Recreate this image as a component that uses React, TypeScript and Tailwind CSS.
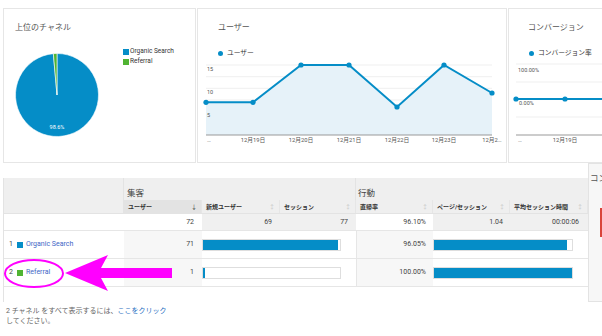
import React from 'react'

const BLUE = '#058dc7'
const GREEN = '#50b432'

const users = [7, 7, 15, 15, 6, 15, 9]
const xs = [8, 55, 103, 151, 199, 246, 294]
const dates = ['…', '12月19日', '12月20日', '12月21日', '12月22日', '12月23日', '12月2…']

function PieChart() {
  const cx = 53
  const cy = 48
  const r = 41.5
  const a = (-1.4 / 100) * 2 * Math.PI
  const gx = cx + r * Math.sin(a)
  const gy = cy - r * Math.cos(a)
  return (
    <svg width="119" height="100" className="shrink-0">
      <path d={`M${cx} ${cy} L${cx} ${cy - r} A${r} ${r} 0 1 1 ${gx} ${gy} Z`} fill={BLUE} stroke="#fff" strokeWidth="0.6" />
      <path d={`M${cx} ${cy} L${gx} ${gy} A${r} ${r} 0 0 1 ${cx} ${cy - r} Z`} fill={GREEN} stroke="#fff" strokeWidth="0.6" />
      <text x={cx} y="82" textAnchor="middle" fontSize="5.5" fill="#fff">98.6%</text>
    </svg>
  )
}

function UsersChart() {
  const ys = users.map((v) => 75 - (v * 70) / 15)
  const pts = xs.map((x, i) => `${x},${ys[i]}`).join(' ')
  const grid = [5, 16.7, 28.3, 40, 51.7, 63.3]
  return (
    <svg width="308" height="90" className="block">
      {grid.map((g) => (
        <line key={g} x1="8" x2="294" y1={g} y2={g} stroke="#efefef" strokeWidth="1" />
      ))}
      <polygon points={`8,75 ${pts} 294,75`} fill="#e6f2f9" />
      <line x1="8" x2="294" y1="75" y2="75" stroke="#999" strokeWidth="1" />
      <polyline points={pts} fill="none" stroke={BLUE} strokeWidth="2" />
      {xs.map((x, i) => (
        <circle key={x} cx={x} cy={ys[i]} r="2.6" fill={BLUE} />
      ))}
      <text x="9" y="11" fontSize="5.5" fill="#555">15</text>
      <text x="9" y="34" fontSize="5.5" fill="#555">10</text>
      <text x="9" y="57" fontSize="5.5" fill="#555">5</text>
      {dates.map((d, i) => (
        <text key={d} x={i === 0 ? 9 : xs[i]} y="82" fontSize="5.8" fill="#555" textAnchor={i === 0 ? 'start' : 'middle'}>
          {d}
        </text>
      ))}
    </svg>
  )
}

function ConvChart() {
  return (
    <svg width="100" height="90" className="block">
      {[4, 22, 57].map((g) => (
        <line key={g} x1="7" x2="100" y1={g} y2={g} stroke="#efefef" strokeWidth="1" />
      ))}
      <line x1="7" x2="100" y1="75" y2="75" stroke="#999" strokeWidth="1" />
      <line x1="7" x2="100" y1="39" y2="39" stroke={BLUE} strokeWidth="2" />
      <circle cx="7" cy="39" r="2.6" fill={BLUE} />
      <circle cx="56" cy="39" r="2.6" fill={BLUE} />
      <text x="9" y="12" fontSize="5.5" fill="#555">100.00%</text>
      <text x="10" y="45" fontSize="5.5" fill="#555">0.00%</text>
      <text x="9" y="82" fontSize="5.8" fill="#555">…</text>
      <text x="56" y="82" fontSize="5.8" fill="#555" textAnchor="middle">12月19日</text>
    </svg>
  )
}

function SortIcon({ active = false }: { active?: boolean }) {
  return <span className={active ? 'text-[6px] text-[#444]' : 'text-[6px] text-[#c9c9c9]'}>{active ? '↓' : '↕'}</span>
}

function SubHead({ label, w, active = false }: { label: string; w: string; active?: boolean }) {
  return (
    <div className={`${w} ${active ? 'bg-[#e3e3e3]' : 'bg-[#efefef]'} flex items-center justify-between border-r border-[#e6e6e6] pl-[4px] pr-[4px]`}>
      <span className="text-[6px] font-bold text-[#333]">{label}</span>
      <SortIcon active={active} />
    </div>
  )
}

function Bar({ pct, w }: { pct: number; w: number }) {
  return (
    <div className="h-[12px] border border-[#dedede] bg-white" style={{ width: w }}>
      <div className="h-full bg-[#058dc7]" style={{ width: `${pct}%` }} />
    </div>
  )
}

const rows = [
  { n: 1, name: 'Organic Search', color: 'bg-[#058dc7]', users: '71', usersPct: 98.6, bounce: '96.05%', bouncePct: 96.05 },
  { n: 2, name: 'Referral', color: 'bg-[#50b432]', users: '1', usersPct: 1.4, bounce: '100.00%', bouncePct: 100 },
]

export default function App() {
  return (
    <div className="relative h-[336px] w-[602px] overflow-hidden bg-white [font-family:Roboto,'Noto_Sans_CJK_JP',sans-serif] text-[#333]">
      {/* top cards */}
      <div className="flex gap-[1px] pl-[3px] pt-[8px]">
        <div className="h-[155px] w-[193px] shrink-0 border border-[#e6e6e6]">
          <div className="pl-[11px] pt-[13px] text-[8px] leading-[12px] text-[#555]">上位のチャネル</div>
          <div className="mt-[13px] flex">
            <PieChart />
            <div className="flex flex-col">
              <div className="flex h-[10px] items-center gap-[1px]">
                <span className="h-[6px] w-[6px] bg-[#058dc7]" />
                <span className="text-[6.5px] text-[#333]">Organic Search</span>
              </div>
              <div className="flex h-[10px] items-center gap-[1px]">
                <span className="h-[6px] w-[6px] bg-[#50b432]" />
                <span className="text-[6.5px] text-[#333]">Referral</span>
              </div>
            </div>
          </div>
        </div>

        <div className="h-[155px] w-[310px] shrink-0 border border-[#e6e6e6]">
          <div className="pl-[20px] pt-[13px] text-[8px] leading-[12px] text-[#555]">ユーザー</div>
          <div className="mt-[14px] flex h-[10px] items-center gap-[4px] pl-[20px]">
            <span className="h-[5px] w-[5px] rounded-full bg-[#058dc7]" />
            <span className="text-[6.75px] text-[#333]">ユーザー</span>
          </div>
          <div className="mt-[2px]">
            <UsersChart />
          </div>
        </div>

        <div className="h-[155px] w-[120px] shrink-0 border border-[#e6e6e6]">
          <div className="pl-[19px] pt-[13px] text-[8px] leading-[12px] text-[#555]">コンバージョン</div>
          <div className="mt-[14px] flex h-[10px] items-center gap-[4px] whitespace-nowrap pl-[20px]">
            <span className="h-[5px] w-[5px] shrink-0 rounded-full bg-[#058dc7]" />
            <span className="text-[6.75px] text-[#333]">コンバージョン率</span>
          </div>
          <div className="mt-[2px]">
            <ConvChart />
          </div>
        </div>
      </div>

      {/* table section */}
      <div className="flex">
        <div className="w-[588px] shrink-0 pl-[3px] pt-[15px]">
          <div className="border-l border-[#e3e3e3] pb-[15px]">
            <div className="flex h-[22px] bg-[#efefef]">
              <div className="w-[120px] border-r border-[#e3e3e3]" />
              <div className="flex w-[232px] items-end border-r border-[#e3e3e3] pb-[1px] pl-[3px] text-[8.5px] leading-[12px] text-[#444]">集客</div>
              <div className="flex w-[232px] items-end pb-[1px] pl-[2px] text-[8.5px] leading-[12px] text-[#444]">行動</div>
            </div>
            <div className="flex h-[14px] border-b border-[#e3e3e3]">
              <div className="w-[120px] border-r border-[#e3e3e3] bg-[#efefef]" />
              <SubHead label="ユーザー" w="w-[78px]" active />
              <SubHead label="新規ユーザー" w="w-[78px]" />
              <SubHead label="セッション" w="w-[76px]" />
              <SubHead label="直帰率" w="w-[77px]" />
              <SubHead label="ページ/セッション" w="w-[77px]" />
              <SubHead label="平均セッション時間" w="w-[78px]" />
            </div>
            <div className="flex h-[17px] border-b border-[#e6e6e6] text-[7px] text-[#444]">
              <div className="w-[120px] bg-white" />
              <div className="flex w-[78px] items-center justify-end bg-white pr-[8px]">72</div>
              <div className="flex w-[78px] items-center justify-end bg-[#f0f0f0] pr-[8px]">69</div>
              <div className="flex w-[76px] items-center justify-end bg-[#f0f0f0] pr-[8px]">77</div>
              <div className="flex w-[77px] items-center justify-end bg-white pr-[7px]">96.10%</div>
              <div className="flex w-[77px] items-center justify-end bg-[#f0f0f0] pr-[7px]">1.04</div>
              <div className="flex w-[78px] items-center justify-end bg-[#f0f0f0] pr-[9px]">00:00:06</div>
            </div>
            {rows.map((r) => (
              <div key={r.n} className="flex h-[28px] border-b border-[#e6e6e6] text-[7px] text-[#444]">
                <div className="flex w-[120px] items-center pl-[5px]">
                  <span className="w-[8px]">{r.n}</span>
                  <span className={`h-[6px] w-[6px] ${r.color}`} />
                  <span className="ml-[3px] text-[#3e66c6]">{r.name}</span>
                </div>
                <div className="flex w-[78px] items-center justify-end bg-[#f7f7f7] pr-[8px]">{r.users}</div>
                <div className="flex w-[154px] items-center">
                  <Bar pct={r.usersPct} w={139} />
                </div>
                <div className="flex w-[77px] items-center justify-end border-l border-[#e6e6e6] bg-[#f7f7f7] pr-[7px]">{r.bounce}</div>
                <div className="flex w-[154px] items-center">
                  <Bar pct={r.bouncePct} w={140} />
                </div>
              </div>
            ))}
          </div>
          <p className="mt-[4px] w-[165px] pl-[3px] text-[7px] leading-[10px] text-[#666]">
            2 チャネル をすべて表示するには、<span className="text-[#1f6fbf]">ここをクリック</span>してください。
          </p>
        </div>

        <div className="h-[139px] flex-1 overflow-hidden border border-r-0 border-[#e3e3e3] bg-[#f7f7f7]">
          <div className="whitespace-nowrap pl-[1px] pt-[8px] text-[8.5px] leading-[12px] text-[#555]">コンバージョン</div>
          <div className="ml-[11px] mt-[24px] h-[29px] w-[20px] bg-[#d9443a]" />
        </div>
      </div>

      {/* annotation */}
      <svg className="pointer-events-none absolute left-0 top-0" width="602" height="336">
        <ellipse cx="34" cy="273.5" rx="29" ry="13.5" fill="none" stroke="#ff00ff" strokeWidth="2" />
        <polygon points="65,273 108,255 101,268 172,268 172,278 101,278 108,291" fill="#ff00ff" />
      </svg>
    </div>
  )
}
